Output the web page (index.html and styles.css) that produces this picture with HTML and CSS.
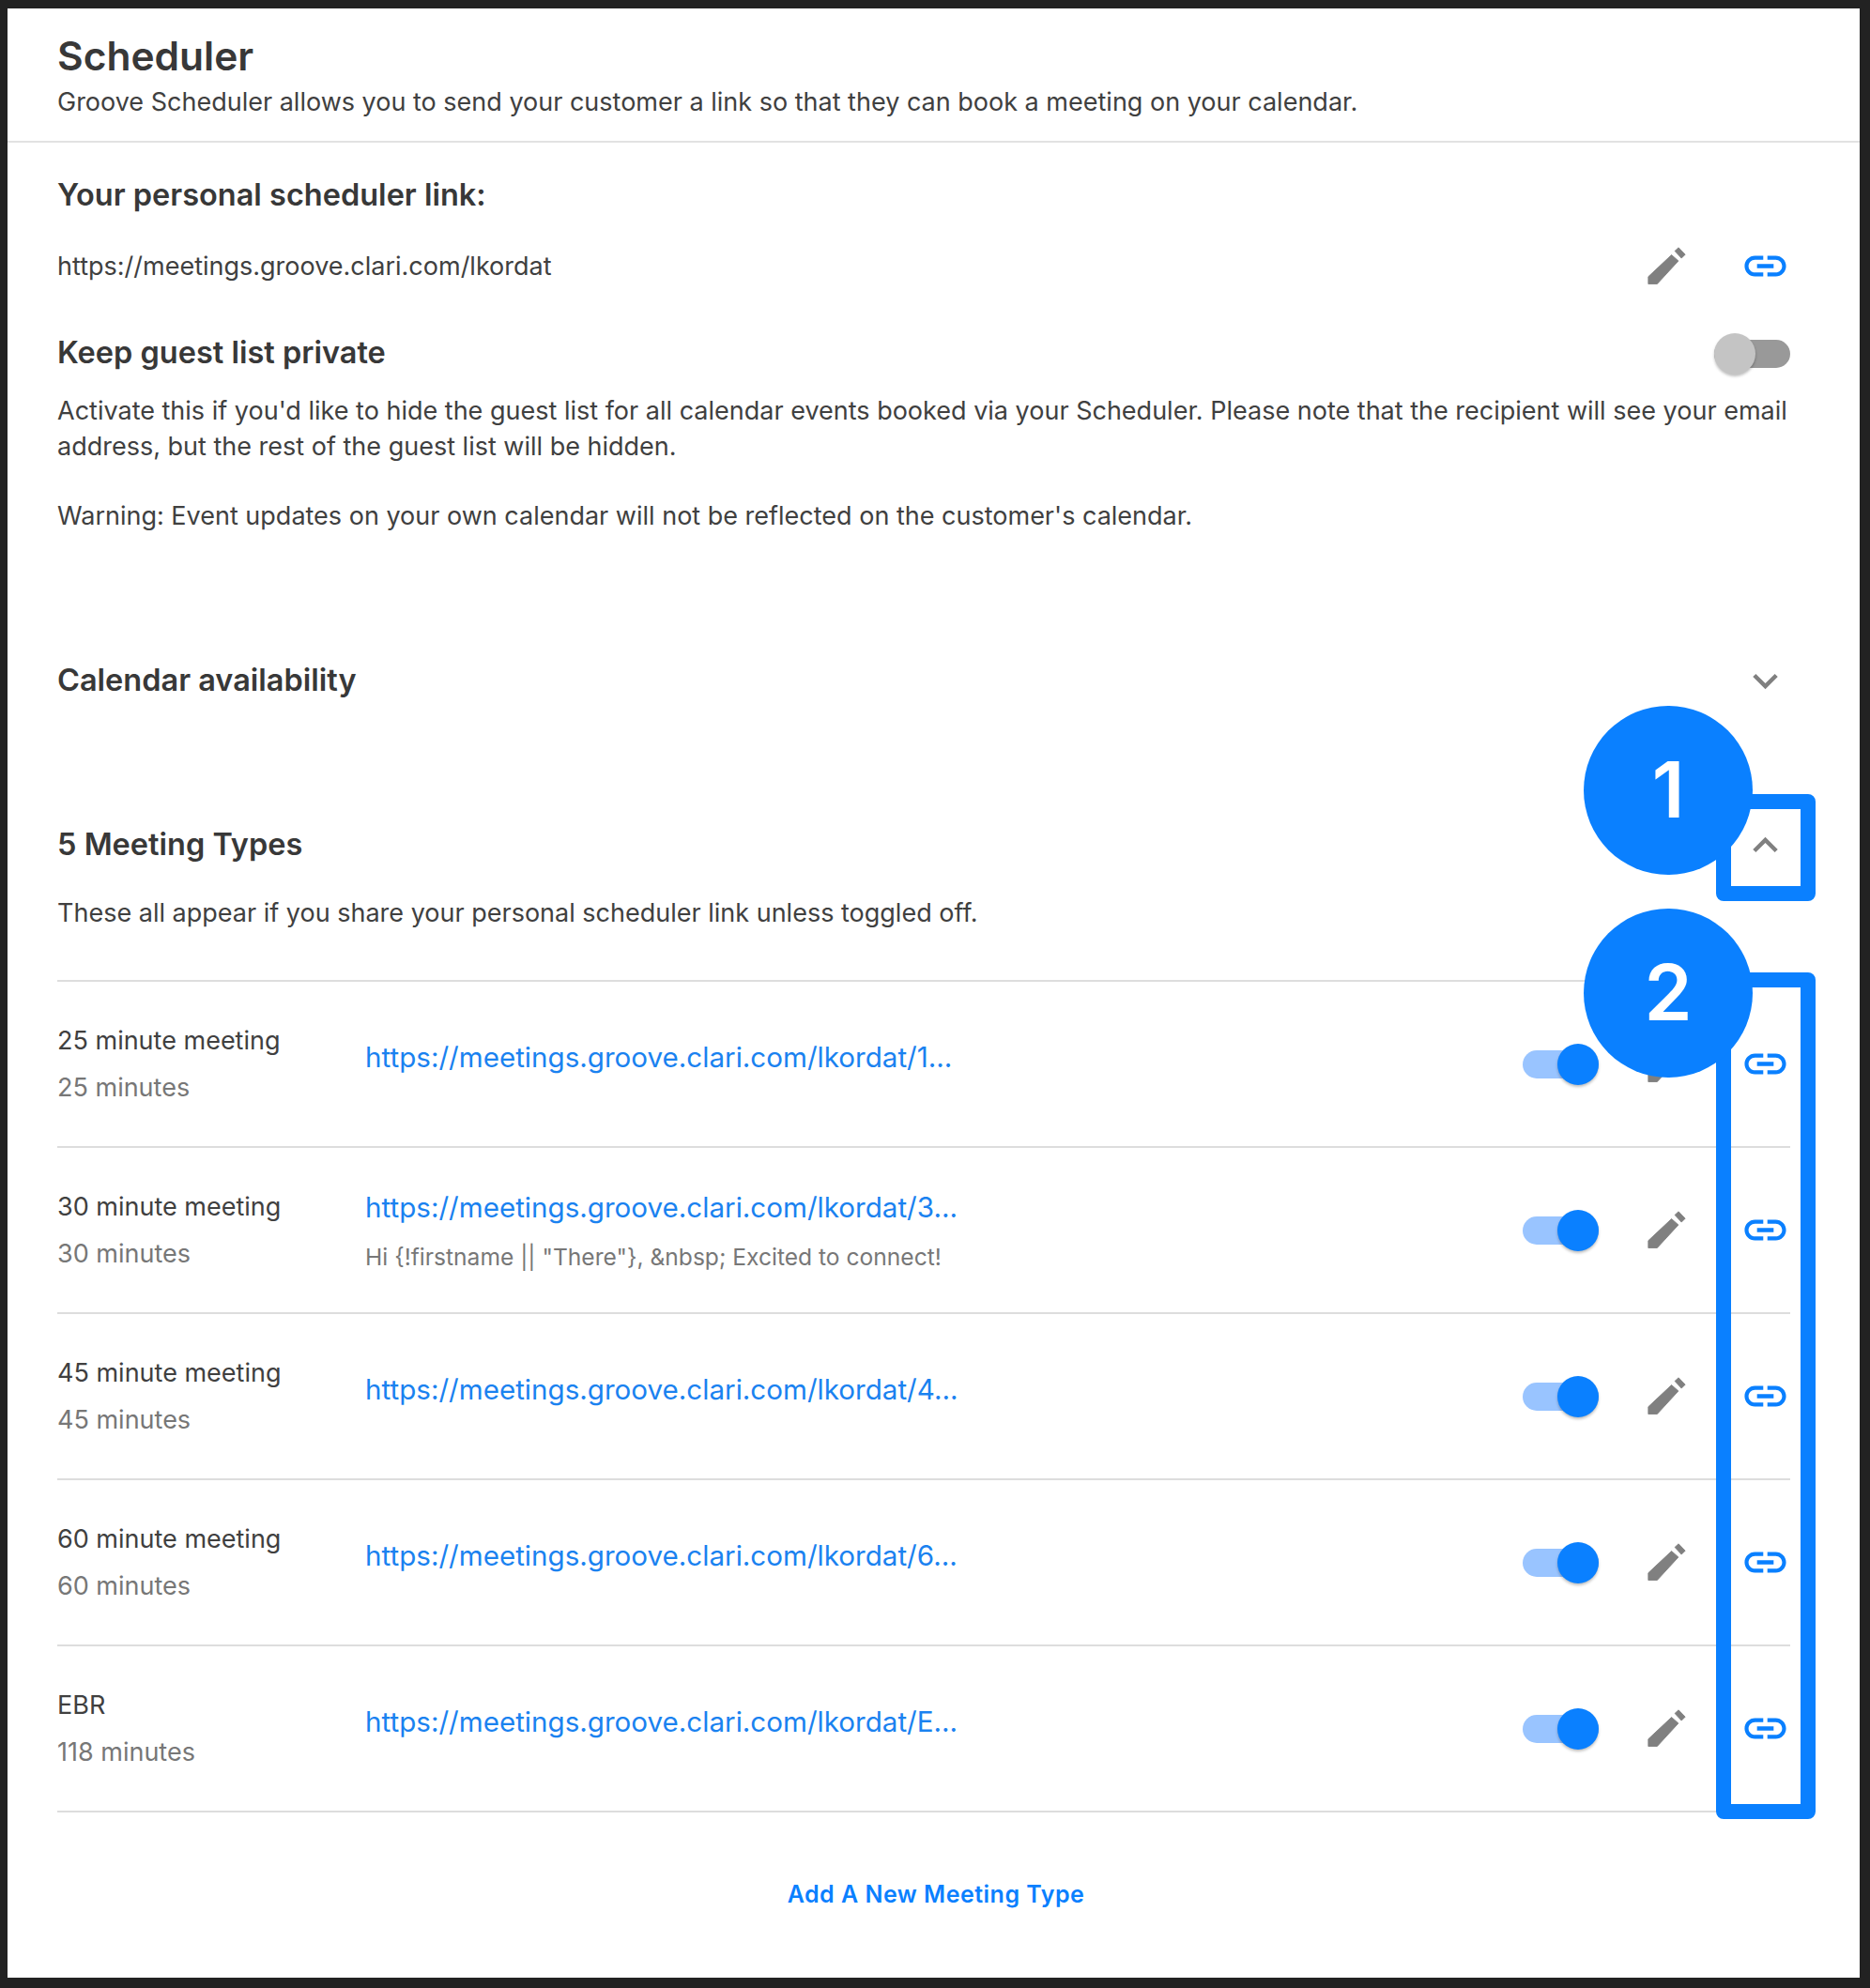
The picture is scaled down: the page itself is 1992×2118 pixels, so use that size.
FILE: index.html
```html
<!DOCTYPE html>
<html lang="en">
<head>
    <meta charset="UTF-8">
    <meta name="viewport" content="width=device-width, initial-scale=1.0">
    <title>Scheduler</title>
    <link rel="stylesheet" href="styles.css">
</head>
<body>
    <svg class="sprites" width="0" height="0">
        <symbol id="pencil" viewBox="0 0 24 24"><path stroke="#808080" stroke-width=".4" stroke-linejoin="round" d="M3.1 17.1L14.3 6.6l3.3 2.9L7.4 20.6H3.1zM15.9 4.7l1.8-1.6 3.2 3.3-1.8 1.8z"/></symbol>
        <symbol id="link" viewBox="0 0 24 24"><path d="M3.9 12c0-1.71 1.39-3.1 3.1-3.1h4V7H7c-2.76 0-5 2.24-5 5s2.24 5 5 5h4v-1.9H7c-1.71 0-3.1-1.39-3.1-3.1zM8 13h8v-2H8v2zm9-6h-4v1.9h4c1.71 0 3.1 1.39 3.1 3.1s-1.39 3.1-3.1 3.1h-4V17h4c2.76 0 5-2.24 5-5s-2.24-5-5-5z"/></symbol>
        <symbol id="chev-down" viewBox="0 0 24 24"><path d="M16.59 8.59L12 13.17 7.41 8.59 6 10l6 6 6-6z"/></symbol>
        <symbol id="chev-up" viewBox="0 0 24 24"><path d="M12 8l-6 6 1.41 1.41L12 10.83l4.59 4.58L18 14z"/></symbol>
    </svg>

    <div class="panel">
        <header class="head">
            <h1 class="title">Scheduler</h1>
            <p class="text">Groove Scheduler allows you to send your customer a link so that they can book a meeting on your calendar.</p>
        </header>

        <div class="content">
            <h2 class="label personal-label">Your personal scheduler link:</h2>
            <div class="personal-row">
                <span class="text">https://meetings.groove.clari.com/lkordat</span>
                <div class="icons">
                    <svg class="icon grey"><use href="#pencil"/></svg>
                    <svg class="icon blue"><use href="#link"/></svg>
                </div>
            </div>

            <div class="private-row">
                <h2 class="label">Keep guest list private</h2>
                <div class="toggle off"><span class="knob"></span></div>
            </div>
            <p class="text para">Activate this if you'd like to hide the guest list for all calendar events booked via your Scheduler. Please note that the recipient will see your email address, but the rest of the guest list will be hidden.</p>
            <p class="text para warn">Warning: Event updates on your own calendar will not be reflected on the customer's calendar.</p>

            <div class="section-row avail">
                <h2 class="label">Calendar availability</h2>
                <svg class="icon grey"><use href="#chev-down"/></svg>
            </div>
            <div class="section-row types">
                <h2 class="label">5 Meeting Types</h2>
                <svg class="icon grey"><use href="#chev-up"/></svg>
            </div>
            <p class="text types-sub">These all appear if you share your personal scheduler link unless toggled off.</p>

            <ul class="meetings">
                <li class="meeting">
                    <div class="m-name"><div class="text">25 minute meeting</div><div class="text dim">25 minutes</div></div>
                    <div class="m-link"><a class="url">https://meetings.groove.clari.com/lkordat/1...</a></div>
                    <div class="actions">
                        <div class="toggle on"><span class="knob"></span></div>
                        <svg class="icon grey"><use href="#pencil"/></svg>
                        <svg class="icon blue"><use href="#link"/></svg>
                    </div>
                </li>
                <li class="meeting">
                    <div class="m-name"><div class="text">30 minute meeting</div><div class="text dim">30 minutes</div></div>
                    <div class="m-link has-note"><a class="url">https://meetings.groove.clari.com/lkordat/3...</a><div class="note">Hi {!firstname || "There"}, &amp;nbsp; Excited to connect!</div></div>
                    <div class="actions">
                        <div class="toggle on"><span class="knob"></span></div>
                        <svg class="icon grey"><use href="#pencil"/></svg>
                        <svg class="icon blue"><use href="#link"/></svg>
                    </div>
                </li>
                <li class="meeting">
                    <div class="m-name"><div class="text">45 minute meeting</div><div class="text dim">45 minutes</div></div>
                    <div class="m-link"><a class="url">https://meetings.groove.clari.com/lkordat/4...</a></div>
                    <div class="actions">
                        <div class="toggle on"><span class="knob"></span></div>
                        <svg class="icon grey"><use href="#pencil"/></svg>
                        <svg class="icon blue"><use href="#link"/></svg>
                    </div>
                </li>
                <li class="meeting">
                    <div class="m-name"><div class="text">60 minute meeting</div><div class="text dim">60 minutes</div></div>
                    <div class="m-link"><a class="url">https://meetings.groove.clari.com/lkordat/6...</a></div>
                    <div class="actions">
                        <div class="toggle on"><span class="knob"></span></div>
                        <svg class="icon grey"><use href="#pencil"/></svg>
                        <svg class="icon blue"><use href="#link"/></svg>
                    </div>
                </li>
                <li class="meeting">
                    <div class="m-name"><div class="text">EBR</div><div class="text dim">118 minutes</div></div>
                    <div class="m-link"><a class="url">https://meetings.groove.clari.com/lkordat/E...</a></div>
                    <div class="actions">
                        <div class="toggle on"><span class="knob"></span></div>
                        <svg class="icon grey"><use href="#pencil"/></svg>
                        <svg class="icon blue"><use href="#link"/></svg>
                    </div>
                </li>
            </ul>

            <div class="add-row"><a class="add-link">Add A New Meeting Type</a></div>
        </div>
    </div>

    <!-- callouts drawn on top of the screenshot -->
    <div class="callout-box box-one"></div>
    <div class="callout-box box-two"></div>
    <div class="badge badge-one">1</div>
    <div class="badge badge-two">2</div>
</body>
</html>
```

FILE: styles.css
```css
* {
    box-sizing: border-box;
}

body {
    margin: 0;
    background-color: #222222;
    font-family: 'Inter', 'Roboto', sans-serif;
    height: 2118px;
    padding: 9px 11px 11px 8px;
    position: relative;
    overflow: hidden;
}

.sprites {
    position: absolute;
}

.panel {
    background-color: #fff;
    height: 2098px;
}

.head {
    height: 143px;
    padding: 28px 0 0 53px;
    border-bottom: 2px solid #e2e2e2;
}

.title {
    margin: 0;
    font-size: 42.5px;
    line-height: 46px;
    font-weight: 600;
    color: #383838;
}

.text {
    margin: 0;
    font-size: 27px;
    line-height: 38px;
    color: #404040;
}

.head .text {
    margin-top: 7px;
}

.content {
    padding: 0 74px 0 53px;
}

.label {
    margin: 0;
    font-size: 32.5px;
    line-height: 40px;
    font-weight: 600;
    color: #383838;
}

.personal-label {
    padding-top: 36px;
}

.personal-row {
    display: flex;
    justify-content: space-between;
    align-items: center;
    height: 53px;
    margin-top: 29px;
}

.icons {
    display: flex;
    gap: 52px;
}

.icon {
    width: 53px;
    height: 53px;
    flex: none;
}

.grey {
    fill: #808080;
}

.blue {
    fill: #0a80ff;
}

.private-row {
    display: flex;
    justify-content: space-between;
    align-items: center;
    height: 46px;
    margin-top: 43px;
}

.toggle {
    width: 81px;
    height: 30px;
    border-radius: 15px;
    position: relative;
    flex: none;
}

.knob {
    position: absolute;
    top: -7px;
    width: 44px;
    height: 44px;
    border-radius: 50%;
    box-shadow: 0 2px 3px rgba(0, 0, 0, 0.25);
}

.toggle.off {
    background-color: #999;
    top: 1px;
}

.toggle.off .knob {
    left: 0;
    background-color: #c4c4c4;
}

.toggle.on {
    background-color: #99c4ff;
}

.toggle.on .knob {
    right: 0;
    background-color: #0a80ff;
}

.para {
    margin-top: 20px;
}

.warn {
    margin-top: 36px;
}

.section-row {
    display: flex;
    justify-content: space-between;
    align-items: center;
    height: 53px;
}

.section-row .label {
    margin-bottom: 2px;
}

.avail {
    margin-top: 130px;
}

.types {
    margin-top: 122px;
}

.types-sub {
    margin-top: 27px;
}

.meetings {
    list-style: none;
    margin: 52px 0 0;
    padding: 0;
    border-top: 2px solid #ddd;
}

.meeting {
    display: flex;
    height: 177px;
    border-bottom: 2px solid #ddd;
    align-items: center;
}

.m-name {
    width: 328px;
    flex: none;
    align-self: flex-start;
    padding-top: 44px;
}

.m-name .text + .text {
    margin-top: 12px;
}

.dim {
    color: #777;
}

.m-link {
    flex: 1;
    align-self: flex-start;
    padding-top: 61px;
}

.m-link.has-note {
    padding-top: 44px;
}

.url {
    font-size: 29.6px;
    line-height: 38px;
    color: #1a82f0;
}

.note {
    font-size: 24.6px;
    line-height: 34px;
    color: #777;
    margin-top: 17px;
}

.actions {
    display: flex;
    align-items: center;
    flex: none;
}

.actions .toggle {
    margin-right: 46px;
}

.actions .icon + .icon {
    margin-left: 52px;
}

.add-row {
    text-align: center;
    padding-top: 69px;
    margin-right: -26px;
}

.add-link {
    font-size: 25px;
    line-height: 36px;
    font-weight: 600;
    letter-spacing: 0.5px;
    color: #0a80ff;
}

.callout-box {
    position: absolute;
    left: 1828px;
    width: 106px;
    border: 16px solid #0a80ff;
    border-radius: 8px;
}

.box-one {
    top: 846px;
    height: 114px;
}

.box-two {
    top: 1036px;
    height: 902px;
}

.badge {
    position: absolute;
    left: 1687px;
    width: 180px;
    height: 180px;
    border-radius: 50%;
    background-color: #0a80ff;
    color: #fff;
    font-family: 'Inter', sans-serif;
    font-weight: 600;
    font-size: 82px;
    line-height: 180px;
    text-align: center;
}

.badge-one {
    top: 752px;
}

.badge-two {
    top: 968px;
}
```
